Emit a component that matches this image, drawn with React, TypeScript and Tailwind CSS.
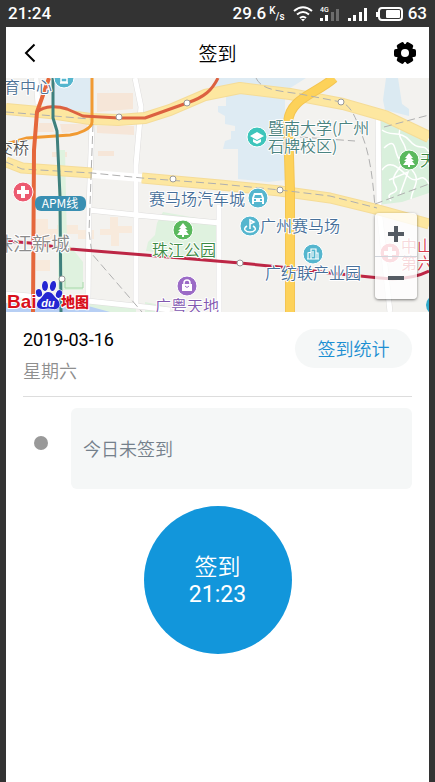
import React from "react";

type Point = [number, number];

const stations: Point[] = [
  [119, 117],
  [187, 103],
  [173, 179],
  [280, 190],
  [341, 102],
  [62, 279],
  [240, 263],
];

type Label = { text: string; x: number; y: number; fill: string; big?: boolean };

const labels: Label[] = [
  { text: "育中心", x: 4, y: 93, fill: "#4f7396" },
  { text: "交桥", x: -3, y: 154, fill: "#555555" },
  { text: "暨南大学(广州", x: 268, y: 134, fill: "#4a8380" },
  { text: "石牌校区)", x: 268, y: 152, fill: "#4a8380" },
  { text: "赛马场汽车城", x: 149, y: 205, fill: "#47709a" },
  { text: "广州赛马场", x: 260, y: 232, fill: "#47709a" },
  { text: "广纺联产业园", x: 265, y: 279, fill: "#47709a" },
  { text: "珠江公园", x: 152, y: 256, fill: "#3c8a45" },
  { text: "广粤天地", x: 155, y: 312, fill: "#8257b0" },
  { text: "天河", x: 420, y: 166, fill: "#3c8a45" },
  { text: "中山", x: 401, y: 252, fill: "#d84050" },
  { text: "第六", x: 401, y: 269, fill: "#d84050" },
  { text: "珠江新城", x: -6, y: 251, fill: "#8b8b8b", big: true },
];

function Pin({ x, y, color, children }: { x: number; y: number; color: string; children?: React.ReactNode }) {
  return (
    <g transform={`translate(${x} ${y})`}>
      <circle r="10" fill={color} stroke="#ffffff" strokeWidth="1" />
      {children}
    </g>
  );
}

function Tree() {
  return <path d="M0-7 4-2H2L5 1H3L6 5H1V7H-1V5H-6L-3 1H-5L-2-2H-4Z" fill="#fff" />;
}

function CityMap() {
  return (
    <svg
      className="block h-full w-full"
      viewBox="6 78 423 234"
      preserveAspectRatio="xMidYMid slice"
      role="img"
      aria-label="地图"
    >
      <rect x="6" y="78" width="423" height="234" fill="#f3f2ef" />

      {/* water, campus and built-up areas */}
      <path d="M53 78H91V114L70 111 53 106Z" fill="#deebf3" />
      <path d="M226 95H232L236 92 285 98V180L268 182 238 179V149H223L225 141 231 139V131H235V126L225 124V116L218 112V106H226Z" fill="#deebf3" />
      <path d="M218 78H306L284 92 250 86 216 95 212 92Z" fill="#deebf3" />
      <path d="M386 78H398L402 104 409 109V116L385 110 383 100Z" fill="#dbeaf2" />
      <path d="M97 93H133V109L97 112Z M97 126H134V135L97 133Z M39 123H52L54 132H37Z M60 124H87V130L62 133Z M52 152H67V157H52Z M98 151H114V156H98Z" fill="#f6e6d8" />
      <path d="M36 219H48V229H57V225H78V230H94V239H78V234H57V239H50V250H36Z M36 260H50V271H36Z M110 217H118V226H132V233H119V246H111V235H100V229H110Z" fill="#f8eadc" />

      {/* parks */}
      <path d="M163 212 219 222V261L146 251 148 242 155 235 157 223Z" fill="#dff2df" />
      <path d="M381 117 429 140V193L402 202 377 205Z" fill="#d9f0dc" />
      <path d="M58 150H65L67 242 83 262V290H58Z M89 300 136 308V312H82Z M145 302 165 306V312H145Z" fill="#dff2df" />
      <g fill="none" stroke="#ffffff" strokeWidth="1.500">
        <path d="M382 130C391 137 401 130 410 141S423 142 429 152M384 148C398 135 393 154 400 160S388 174 395 185 383 190 391 201M382 170C391 157 401 171 410 178S421 170 429 184M401 126C395 139 407 142 406 153M412 170C422 181 412 188 411 199M389 180 408 172 400 194" />
      </g>
      <path d="M6 303 88 306 110 312H6Z" fill="#b7cff4" />

      {/* side streets */}
      <g fill="none" stroke="#dedddc" strokeWidth="6" strokeLinejoin="round">
        <path d="M36 78 38 104M92 124 89 208 88 298M135 78 141 107 136 165V306M88 210 136 215 220 223M219 205V312M6 294 88 301 145 307 170 310M378 116 379 208 390 312" />
      </g>
      <g fill="none" stroke="#ffffff" strokeWidth="5" strokeLinejoin="round">
        <path d="M36 78 38 104M92 124 89 208 88 298M135 78 141 107 136 165V306M88 210 136 215 220 223M219 205V312M6 294 88 301 145 307 170 310M378 116 379 208 390 312" />
      </g>
      <path d="M92 174 142 178" stroke="#ffffff" strokeWidth="8" />
      <path d="M65 280V288H83V282" fill="none" stroke="#a6d9a9" strokeWidth="1" />

      {/* main roads */}
      <g fill="none" stroke="#f5dc98" strokeLinejoin="round">
        <path d="M6 109 50 113 90 119 118 120 145 118 170 110 205 95 240 88 290 94 343 104 385 116 429 137" strokeWidth="12" />
        <path d="M6 162 22 168 92 173M142 178 220 185 280 191 330 198 375 209 429 224" strokeWidth="11" />
      </g>
      <g fill="none" stroke="#fde7a0" strokeLinejoin="round">
        <path d="M6 109 50 113 90 119 118 120 145 118 170 110 205 95 240 88 290 94 343 104 385 116 429 137" strokeWidth="10" />
        <path d="M6 162 22 168 92 173M142 178 220 185 280 191 330 198 375 209 429 224" strokeWidth="9" />
      </g>
      <path d="M334 78C316 94 290 98 288 122L290 190V312" fill="none" stroke="#f4c552" strokeWidth="10" />
      <path d="M334 78C316 94 290 98 288 122L290 190V312" fill="none" stroke="#fdd25a" strokeWidth="8" />

      {/* railways */}
      <g fill="none" stroke="#b0b0b0" strokeWidth="1" strokeDasharray="8 4">
        <path d="M6 112 90 119M6 162 22 169 92 173 142 178 220 184 280 190 330 196 377 208M256 78C262 91 282 91 300 94L341 102C352 106 356 119 362 135 370 155 373 180 375 208M93 124 89 232 92 254 142 312M384 127 429 115M300 137 355 141M375 204 429 184" />
      </g>

      {/* metro lines */}
      <g fill="none" strokeWidth="3" strokeLinejoin="round">
        <path d="M92 78V122C92 129 78 134 70 135L27 138 6 144" stroke="#f19a32" />
        <path d="M49 78 37 112 34 150 33 312" stroke="#e5673b" strokeWidth="4" />
        <path d="M37 112C45 105 58 106 67 109L83 116 119 118 145 118 187 103C205 97 212 90 218 78" stroke="#dc6140" />
        <path d="M53 78V118L57 131 60 196 61 312" stroke="#3f807d" />
        <path d="M6 241 30 243 70 249 145 255 240 263 290 268 330 273 380 278C400 280 415 278 429 271" stroke="#bd2645" />
      </g>
      <g fill="#ffffff" stroke="#999999" strokeWidth="1">
        {stations.map(([cx, cy]) => (
          <circle key={`${cx}-${cy}`} cx={cx} cy={cy} r="3" />
        ))}
      </g>

      <rect x="35" y="196" width="51" height="15" rx="6" fill="#398fb2" />

      <Pin x={64} y={78} color="#55b6ce">
        <path d="M-4 5H4M-3 0H3V4H-3Z" fill="none" stroke="#fff" strokeWidth="1.500" />
      </Pin>
      <Pin x={257} y={137} color="#3dc5bb">
        <path d="M-7-1 0-5 7-1 0 3ZM-4 2 0 4 4 2V5L0 7-4 5Z" fill="#fff" />
      </Pin>
      <Pin x={409} y={160} color="#5ab95d"><Tree /></Pin>
      <Pin x={183} y={230} color="#5ab95d"><Tree /></Pin>
      <Pin x={23} y={192} color="#ec5a70">
        <path d="M-2-6H2V-2H6V2H2V6H-2V2H-6V-2H-2Z" fill="#fff" />
      </Pin>
      <Pin x={390} y={253} color="#ec5a70">
        <path d="M-2-6H2V-2H6V2H2V6H-2V2H-6V-2H-2Z" fill="#fff" />
      </Pin>
      <Pin x={258} y={198} color="#55b6ce">
        <path d="M-4-5H4L6 0V6H4V4H-4V6H-6V0ZM-3-3-4 0H4L3-3ZM-4 1V3H-2V1ZM2 1V3H4V1Z" fill="#fff" fillRule="evenodd" />
      </Pin>
      <Pin x={250} y={226} color="#55b6ce">
        <path d="M0 3V-6L4-4 0-2M-3 0C-8 3-4 6 0 6S8 3 3 0" fill="none" stroke="#fff" strokeWidth="1.500" />
      </Pin>
      <Pin x={313} y={254} color="#55b6ce">
        <path d="M-5 5V-1L-2-2V5M-2 5V-5H3V5M3-1H5V5M-6 5H6M0-3V3" fill="none" stroke="#fff" strokeWidth="1.200" />
      </Pin>
      <Pin x={187} y={286} color="#9b6bc6">
        <path d="M-5-2H5V5H-5Z" fill="#fff" />
        <path d="M-3-1V-3Q-3-6 0-6T3-3V-1" fill="none" stroke="#fff" strokeWidth="1.500" />
        <path d="M-2 0Q0 3 2 0" fill="none" stroke="#9b6bc6" />
      </Pin>
      <circle cx="436" cy="305" r="10" fill="#30aacb" />

      <g stroke="#ffffff" strokeWidth="2" strokeLinejoin="round" style={{ paintOrder: "stroke" }}>
        {labels.map((l) => (
          <text key={l.text} x={l.x} y={l.y} fill={l.fill} className={l.big ? "text-[19px]" : "text-[16px]"}>
            {l.text}
          </text>
        ))}
      </g>
      <text x="60" y="208" textAnchor="middle" fill="#ffffff" className="text-[12px] font-normal">
        APM线
      </text>

      {/* map provider mark */}
      <g stroke="#ffffff" strokeWidth="2" strokeLinejoin="round" style={{ paintOrder: "stroke" }}>
        <text x="7" y="308" fill="#d9101b" className="font-['Liberation_Sans'] text-[19px] font-bold">Bai</text>
        <text x="61" y="307" fill="#d9101b" className="text-[14px] font-black">地图</text>
        <g fill="#2426d2" strokeWidth="1">
          <ellipse cx="39" cy="293" rx="3" ry="4" transform="rotate(-15 39 293)" />
          <ellipse cx="45" cy="286" rx="3" ry="5" />
          <ellipse cx="53" cy="286" rx="3" ry="5" transform="rotate(12 53 286)" />
          <ellipse cx="59" cy="294" rx="3" ry="4" transform="rotate(20 59 294)" />
          <path d="M48 292C53 292 54 297 58 300 62 306 58 310 53 309Q48 308 44 309C36 310 35 303 40 299 43 297 44 292 48 292Z" />
        </g>
      </g>
      <text x="48" y="307" textAnchor="middle" fill="#ffffff" className="font-['Liberation_Sans'] text-[11px] font-bold italic">
        du
      </text>
    </svg>
  );
}

function StatusBar() {
  return (
    <div className="flex h-[27px] items-center bg-[#333333] px-2 font-['Roboto',sans-serif] text-[17px] leading-[27px] font-medium text-white">
      <span>21:24</span>
      <span className="ml-auto">29.6</span>
      <span className="ml-[3px] flex h-[18px] text-[10px] leading-3">
        <span>K</span>
        <span className="self-end">/s</span>
      </span>
      <svg className="ml-2 h-[16px] w-[20px]" viewBox="0 0 20 16" fill="none" stroke="#fff" strokeWidth="2" aria-hidden="true">
        <path d="M1 5Q10-2.500 19 5M4 8.500Q10 3.500 16 8.500M7 12Q10 9.500 13 12" />
        <path d="M8 13H12L10 15.500Z" fill="#fff" stroke="none" />
      </svg>
      <svg className="ml-[7px] h-[16px] w-[20px]" viewBox="0 0 20 16" aria-hidden="true">
        <text x="0" y="6" fill="#fff" className="text-[7px]">4G</text>
        <path d="M0 12H3V15H0ZM5 9H8V15H5Z" fill="#fff" />
        <path d="M11 6H14V15H11ZM16 3H19V15H16Z" fill="#6d6d6d" />
      </svg>
      <svg className="ml-2 h-[16px] w-[20px]" viewBox="0 0 20 16" aria-hidden="true">
        <path d="M0 12H3V15H0ZM5 9H8V15H5ZM11 6H14V15H11ZM16 2H19V15H16Z" fill="#fff" />
      </svg>
      <svg className="mr-[5px] ml-2 h-[16px] w-[27px]" viewBox="0 0 27 16" aria-hidden="true">
        <path d="M0 6H2V11H0Z" fill="#fff" />
        <rect x="3" y="2" width="23" height="12" rx="3" fill="none" stroke="#fff" strokeWidth="2" />
        <rect x="10" y="4" width="14" height="8" rx="1" fill="#fff" />
      </svg>
      <span>63</span>
    </div>
  );
}

export default function App() {
  return (
    <div className="flex min-h-screen flex-col bg-[#333333] font-['Noto_Sans_CJK_SC',sans-serif]">
      <StatusBar />
      <div className="mx-[6px] flex grow flex-col bg-white font-[350]">
        <header className="flex h-[51px] items-center justify-between px-3">
          <button type="button" aria-label="返回" className="flex w-6 justify-center">
            <svg className="h-5 w-3" viewBox="0 0 12 20" fill="none" stroke="#000" strokeWidth="2" aria-hidden="true">
              <path d="M10.500 1.500 2 10 10.500 18.500" />
            </svg>
          </button>
          <h1 className="text-[19px] leading-7 font-[350] text-black">签到</h1>
          <button type="button" aria-label="设置" className="flex w-6 justify-center">
            <svg className="h-6 w-6" viewBox="-12 -12 24 24" aria-hidden="true">
              <circle r="9" />
              <rect x="-11" y="-4" width="22" height="8" rx="2" />
              <rect x="-11" y="-4" width="22" height="8" rx="2" transform="rotate(60)" />
              <rect x="-11" y="-4" width="22" height="8" rx="2" transform="rotate(120)" />
              <circle r="4" fill="#fff" />
            </svg>
          </button>
        </header>

        <div className="relative h-[234px] overflow-hidden">
          <CityMap />
          <div className="absolute right-3 bottom-[13px] flex h-[86px] w-[42px] flex-col rounded bg-white/80 shadow-[0_1px_3px_rgba(0,0,0,0.5)]">
            <button type="button" aria-label="放大" className="flex flex-1 items-center justify-center border-b border-gray-300">
              <svg className="h-[18px] w-[18px]" viewBox="0 0 18 18" aria-hidden="true">
                <path d="M7 1H11V7H17V11H11V17H7V11H1V7H7Z" fill="#555b63" />
              </svg>
            </button>
            <button type="button" aria-label="缩小" className="flex flex-1 items-center justify-center">
              <svg className="h-[18px] w-[18px]" viewBox="0 0 18 18" aria-hidden="true">
                <path d="M1 7H17V11H1Z" fill="#555b63" />
              </svg>
            </button>
          </div>
        </div>

        <main className="px-[17px]">
          <section className="flex items-start justify-between border-b border-[#dddddd] pt-3 pb-[10px] text-[18px]">
            <div className="leading-[31px]">
              <p className="font-['Roboto',sans-serif] font-normal text-black">2019-03-16</p>
              <p className="text-[#8f8f8f]">星期六</p>
            </div>
            <button type="button" className="mt-[5px] h-[39px] w-[117px] rounded-full bg-[#f5f7f7] text-[#1c8fd2]">
              签到统计
            </button>
          </section>

          <section className="mt-[11px] flex items-center">
            <span className="mr-[23px] ml-[11px] size-[14px] -translate-y-1.5 rounded-full bg-[#999999]" />
            <p className="flex h-[81px] grow items-center rounded-md bg-[#f5f7f7] px-3 text-[18px] text-[#74808b]">今日未签到</p>
          </section>

          <button
            type="button"
            className="mx-auto mt-[17px] flex size-[148px] flex-col items-center justify-center rounded-full bg-[#1296db] text-[23px] leading-[30px] text-white"
          >
            <span>签到</span>
            <span className="font-['Roboto',sans-serif] font-normal">21:23</span>
          </button>
        </main>
      </div>
    </div>
  );
}
